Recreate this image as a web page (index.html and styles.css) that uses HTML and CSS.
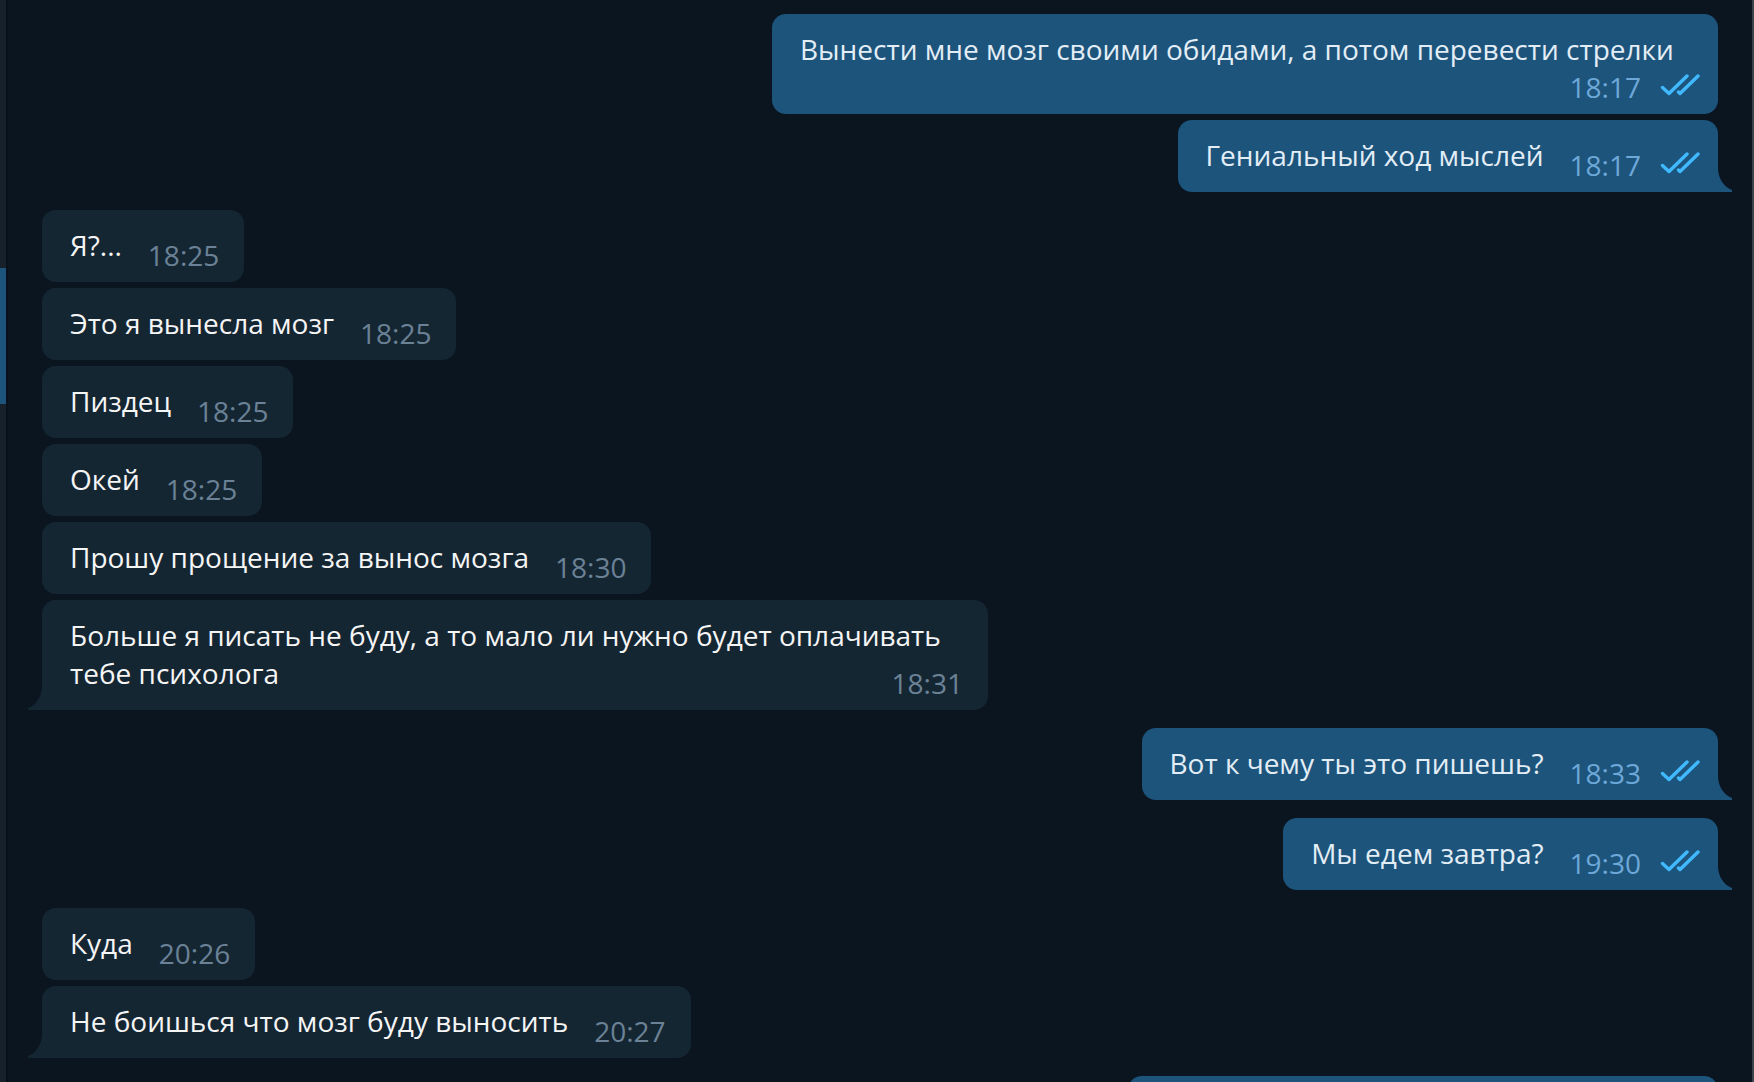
FILE: index.html
```html
<!DOCTYPE html>
<html lang="ru">
<head>
  <meta charset="UTF-8">
  <meta name="viewport" content="width=device-width, initial-scale=1.0">
  <title>Чат</title>
  <link rel="stylesheet" href="styles.css">
</head>
<body>
  <svg class="sprite" aria-hidden="true">
    <symbol id="read" viewBox="0 0 40 22">
      <path d="M2.5 13.5 L9 19.5 L27 2 M18.5 18 L20 19.5 L38 2" fill="none" stroke="currentColor" stroke-width="3.4" stroke-linecap="round" stroke-linejoin="round"/>
    </symbol>
    <symbol id="tail" viewBox="0 0 14 24">
      <path d="M0 0 C0 9 5 19 14 22 V24 H0 Z" fill="currentColor"/>
    </symbol>
  </svg>

  <aside class="dialogs">
    <div class="dialog-active"></div>
  </aside>

  <main class="chat">
    <section class="group out">
      <div class="message time-below">Вынести мне мозг своими обидами, а потом перевести стрелки<span class="meta"><time>18:17</time><svg class="read"><use href="#read"/></svg></span></div>
      <div class="message last">Гениальный ход мыслей<span class="meta"><time>18:17</time><svg class="read"><use href="#read"/></svg></span><svg class="tail"><use href="#tail"/></svg></div>
    </section>

    <section class="group in">
      <div class="message">Я?...<span class="meta"><time>18:25</time></span></div>
      <div class="message">Это я вынесла мозг<span class="meta"><time>18:25</time></span></div>
      <div class="message">Пиздец<span class="meta"><time>18:25</time></span></div>
      <div class="message">Окей<span class="meta"><time>18:25</time></span></div>
      <div class="message">Прошу прощение за вынос мозга<span class="meta"><time>18:30</time></span></div>
      <div class="message last">Больше я писать не буду, а то мало ли нужно будет оплачивать тебе психолога<span class="meta"><time>18:31</time></span><svg class="tail"><use href="#tail"/></svg></div>
    </section>

    <section class="group out">
      <div class="message last">Вот к чему ты это пишешь?<span class="meta"><time>18:33</time><svg class="read"><use href="#read"/></svg></span><svg class="tail"><use href="#tail"/></svg></div>
    </section>

    <section class="group out">
      <div class="message last">Мы едем завтра?<span class="meta"><time>19:30</time><svg class="read"><use href="#read"/></svg></span><svg class="tail"><use href="#tail"/></svg></div>
    </section>

    <section class="group in">
      <div class="message">Куда<span class="meta"><time>20:26</time></span></div>
      <div class="message last">Не боишься что мозг буду выносить<span class="meta"><time>20:27</time></span><svg class="tail"><use href="#tail"/></svg></div>
    </section>

    <section class="group out">
      <div class="message next"></div>
    </section>
  </main>
</body>
</html>
```

FILE: styles.css
```css
* {
  box-sizing: border-box;
}

body {
  display: flex;
  height: 100vh;
  margin: 0;
  overflow: hidden;
  background: #0b1520;
  font-family: "Open Sans", "Noto Sans", sans-serif;
  font-size: 28px;
  line-height: 38px;
}

.sprite {
  display: none;
}

/* edge of the dialog list */
.dialogs {
  flex: none;
  width: 8px;
  padding-top: 268px;
  background: #16212c;
  border-right: 2px solid #08111b;
}

.dialog-active {
  height: 136px;
  background: #1c547c;
}

.chat {
  flex: 1;
  display: flex;
  flex-direction: column;
  gap: 18px;
  padding: 14px 34px;
  border-right: 2px solid #3b434c;
  overflow: hidden;
}

.group {
  display: flex;
  flex-direction: column;
  align-items: flex-start;
  gap: 6px;
}

.group.out {
  align-items: flex-end;
}

.message {
  display: flow-root;
  position: relative;
  flex: none;
  max-width: 946px;
  padding: 16px 25px 8px 28px;
  border-radius: 14px;
}

.in .message {
  background: #152633;
  color: #f5f5f5;
}

.out .message {
  padding-right: 18px;
  background: #1c547c;
  color: #e3edf5;
}

.in .last {
  border-bottom-left-radius: 0;
}

.out .last {
  border-bottom-right-radius: 0;
}

.meta {
  float: right;
  display: flex;
  align-items: center;
  gap: 19px;
  margin-top: 10px;
  margin-left: 26px;
}

.time-below .meta {
  margin-top: 0;
}

.in .meta {
  color: #6b8296;
}

.out .meta {
  color: #6ea8d8;
}

.read {
  width: 40px;
  height: 22px;
  margin-bottom: 4px;
  color: #40b9ff;
}

.tail {
  position: absolute;
  bottom: 0;
  width: 14px;
  height: 24px;
}

.in .tail {
  right: 100%;
  color: #152633;
  transform: scaleX(-1);
}

.out .tail {
  left: 100%;
  color: #1c547c;
}

/* next message, cut by the bottom of the window */
.next {
  width: 590px;
  height: 72px;
}
```
